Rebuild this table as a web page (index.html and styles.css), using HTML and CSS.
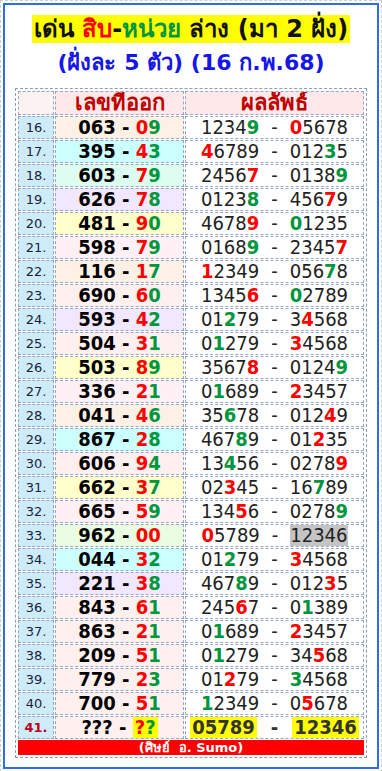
FILE: index.html
```html
<!DOCTYPE html>
<html lang="th">
<head>
    <meta charset="UTF-8">
    <meta name="viewport" content="width=device-width, initial-scale=1.0">
    <title>เด่น สิบ-หน่วย ล่าง</title>
    <link rel="stylesheet" href="styles.css">
</head>
<body>
    <div class="page">
        <div class="frame">
            <div class="title">
                <span class="title-box">เด่น <span class="r">สิบ</span>-<span class="g">หน่วย</span> ล่าง (มา 2 ฝั่ง)</span>
            </div>
            <div class="subtitle">(ฝั่งละ 5 ตัว) (16 ก.พ.68)</div>

            <table class="board">
                <tr class="head">
                    <td class="no"></td>
                    <td class="out">เลขที่ออก</td>
                    <td class="res">ผลลัพธ์</td>
                </tr>
                <tr class="peach">
                    <td class="no">16.</td>
                    <td class="out">063 - <span class="r">0</span><span class="g">9</span></td>
                    <td class="res">1234<b class="g">9</b><span class="dash">-</span><b class="r">0</b>5678</td>
                </tr>
                <tr class="cyan">
                    <td class="no">17.</td>
                    <td class="out">395 - <span class="r">4</span><span class="g">3</span></td>
                    <td class="res"><b class="r">4</b>6789<span class="dash">-</span>012<b class="g">3</b>5</td>
                </tr>
                <tr class="mint">
                    <td class="no">18.</td>
                    <td class="out">603 - <span class="r">7</span><span class="g">9</span></td>
                    <td class="res">2456<b class="r">7</b><span class="dash">-</span>0138<b class="g">9</b></td>
                </tr>
                <tr class="lilac">
                    <td class="no">19.</td>
                    <td class="out">626 - <span class="r">7</span><span class="g">8</span></td>
                    <td class="res">0123<b class="g">8</b><span class="dash">-</span>456<b class="r">7</b>9</td>
                </tr>
                <tr class="lemon">
                    <td class="no">20.</td>
                    <td class="out">481 - <span class="r">9</span><span class="g">0</span></td>
                    <td class="res">4678<b class="r">9</b><span class="dash">-</span><b class="g">0</b>1235</td>
                </tr>
                <tr class="rose">
                    <td class="no">21.</td>
                    <td class="out">598 - <span class="r">7</span><span class="g">9</span></td>
                    <td class="res">0168<b class="g">9</b><span class="dash">-</span>2345<b class="r">7</b></td>
                </tr>
                <tr class="peach">
                    <td class="no">22.</td>
                    <td class="out">116 - <span class="r">1</span><span class="g">7</span></td>
                    <td class="res"><b class="r">1</b>2349<span class="dash">-</span>056<b class="g">7</b>8</td>
                </tr>
                <tr class="pink">
                    <td class="no">23.</td>
                    <td class="out">690 - <span class="r">6</span><span class="g">0</span></td>
                    <td class="res">1345<b class="r">6</b><span class="dash">-</span><b class="g">0</b>2789</td>
                </tr>
                <tr class="lilac">
                    <td class="no">24.</td>
                    <td class="out">593 - <span class="r">4</span><span class="g">2</span></td>
                    <td class="res">01<b class="g">2</b>79<span class="dash">-</span>3<b class="r">4</b>568</td>
                </tr>
                <tr class="pink">
                    <td class="no">25.</td>
                    <td class="out">504 - <span class="r">3</span><span class="g">1</span></td>
                    <td class="res">0<b class="g">1</b>279<span class="dash">-</span><b class="r">3</b>4568</td>
                </tr>
                <tr class="lemon">
                    <td class="no">26.</td>
                    <td class="out">503 - <span class="r">8</span><span class="g">9</span></td>
                    <td class="res">3567<b class="r">8</b><span class="dash">-</span>0124<b class="g">9</b></td>
                </tr>
                <tr class="rose">
                    <td class="no">27.</td>
                    <td class="out">336 - <span class="r">2</span><span class="g">1</span></td>
                    <td class="res">0<b class="g">1</b>689<span class="dash">-</span><b class="r">2</b>3457</td>
                </tr>
                <tr class="peach">
                    <td class="no">28.</td>
                    <td class="out">041 - <span class="r">4</span><span class="g">6</span></td>
                    <td class="res">35<b class="g">6</b>78<span class="dash">-</span>012<b class="r">4</b>9</td>
                </tr>
                <tr class="cyan">
                    <td class="no">29.</td>
                    <td class="out">867 - <span class="r">2</span><span class="g">8</span></td>
                    <td class="res">467<b class="g">8</b>9<span class="dash">-</span>01<b class="r">2</b>35</td>
                </tr>
                <tr class="pink">
                    <td class="no">30.</td>
                    <td class="out">606 - <span class="r">9</span><span class="g">4</span></td>
                    <td class="res">13<b class="g">4</b>56<span class="dash">-</span>0278<b class="r">9</b></td>
                </tr>
                <tr class="lemon">
                    <td class="no">31.</td>
                    <td class="out">662 - <span class="r">3</span><span class="g">7</span></td>
                    <td class="res">02<b class="r">3</b>45<span class="dash">-</span>16<b class="g">7</b>89</td>
                </tr>
                <tr class="rose">
                    <td class="no">32.</td>
                    <td class="out">665 - <span class="r">5</span><span class="g">9</span></td>
                    <td class="res">134<b class="r">5</b>6<span class="dash">-</span>0278<b class="g">9</b></td>
                </tr>
                <tr class="lime">
                    <td class="no">33.</td>
                    <td class="out">962 - <span class="r">00</span></td>
                    <td class="res"><b class="r">0</b>5789<span class="dash">-</span><span class="grey">12346</span></td>
                </tr>
                <tr class="cyan">
                    <td class="no">34.</td>
                    <td class="out">044 - <span class="r">3</span><span class="g">2</span></td>
                    <td class="res">01<b class="g">2</b>79<span class="dash">-</span><b class="r">3</b>4568</td>
                </tr>
                <tr class="lilac">
                    <td class="no">35.</td>
                    <td class="out">221 - <span class="r">3</span><span class="g">8</span></td>
                    <td class="res">467<b class="g">8</b>9<span class="dash">-</span>012<b class="r">3</b>5</td>
                </tr>
                <tr class="pink">
                    <td class="no">36.</td>
                    <td class="out">843 - <span class="r">6</span><span class="g">1</span></td>
                    <td class="res">245<b class="r">6</b>7<span class="dash">-</span>0<b class="g">1</b>389</td>
                </tr>
                <tr class="pink">
                    <td class="no">37.</td>
                    <td class="out">863 - <span class="r">2</span><span class="g">1</span></td>
                    <td class="res">0<b class="g">1</b>689<span class="dash">-</span><b class="r">2</b>3457</td>
                </tr>
                <tr class="pink">
                    <td class="no">38.</td>
                    <td class="out">209 - <span class="r">5</span><span class="g">1</span></td>
                    <td class="res">0<b class="g">1</b>279<span class="dash">-</span>34<b class="r">5</b>68</td>
                </tr>
                <tr class="pink">
                    <td class="no">39.</td>
                    <td class="out">779 - <span class="r">2</span><span class="g">3</span></td>
                    <td class="res">01<b class="r">2</b>79<span class="dash">-</span><b class="g">3</b>4568</td>
                </tr>
                <tr class="pink">
                    <td class="no">40.</td>
                    <td class="out">700 - <span class="r">5</span><span class="g">1</span></td>
                    <td class="res"><b class="g">1</b>2349<span class="dash">-</span>0<b class="r">5</b>678</td>
                </tr>
                <tr class="pink next">
                    <td class="no">41.</td>
                    <td class="out">??? - <span class="mark"><span class="r">?</span><span class="g">?</span></span></td>
                    <td class="res"><span class="mark">05789</span><span class="dash">-</span><span class="mark">12346</span></td>
                </tr>
                <tr>
                    <td class="credit" colspan="3">(ศิษย์&nbsp; อ. Sumo)</td>
                </tr>
            </table>
        </div>
    </div>
</body>
</html>
```

FILE: styles.css
```css
body {
    margin: 0;
    background-color: #ffffff;
    font-family: "DejaVu Sans", "Noto Sans", sans-serif;
}

.page {
    width: 382px;
    box-sizing: border-box;
    padding: 2px;
    border: 1px dashed #c4cede;
}

.frame {
    border: 2px solid #2d6de6;
    padding: 10px 0 9px;
}

.title {
    text-align: center;
    line-height: 28px;
}

.title-box {
    display: inline-block;
    background-color: #ffff00;
    padding: 0 2px;
    font-size: 24px;
    font-weight: bold;
    color: #111111;
}

.subtitle {
    margin-top: 3px;
    text-align: center;
    line-height: 27px;
    font-size: 22px;
    font-weight: bold;
    color: #1616e8;
}

.r {
    color: #ff0000;
}

.g {
    color: #00963c;
}

.board {
    width: 352px;
    margin: 12px auto 0;
    border: 1px dashed #8c9cbc;
    border-spacing: 1px;
    padding: 1px;
    table-layout: fixed;
}

.board td {
    border: 1px dashed #97a7c6;
    padding: 0;
    text-align: center;
    line-height: 21px;
    white-space: nowrap;
    overflow: hidden;
}

.no {
    width: 34px;
    background-color: #cdecf8;
    font-size: 13px;
    color: #1c1c3c;
}

.out {
    width: 127px;
    font-family: "DejaVu Sans Condensed", "DejaVu Sans", sans-serif;
    font-stretch: condensed;
    font-size: 20px;
    font-weight: bold;
    color: #000000;
}

.res {
    background-color: #ffffff;
    font-family: "DejaVu Sans Condensed", "DejaVu Sans", sans-serif;
    font-stretch: condensed;
    font-size: 20px;
    color: #222222;
}

.dash {
    margin: 0 12px;
}

.head td {
    line-height: 22px;
    background-color: #fde9e9;
    font-family: "DejaVu Sans", "Noto Sans", sans-serif;
    font-stretch: normal;
    font-size: 22px;
    font-weight: bold;
    color: #c00000;
}

.head .no {
    background-color: #fbf2f2;
}

.peach .out { background-color: #fdf0e4; }
.cyan .out { background-color: #ccffff; }
.mint .out { background-color: #dcfdf0; }
.lilac .out { background-color: #f1e8ff; }
.lemon .out { background-color: #ffffcc; }
.rose .out { background-color: #fff0f6; }
.pink .out { background-color: #fff0f0; }
.lime .out { background-color: #eafde0; }

.grey {
    display: inline-block;
    background-color: #c4c4c4;
    line-height: 21px;
    vertical-align: top;
}

.mark {
    display: inline-block;
    background-color: #ffff00;
    padding: 0 2px;
    line-height: 21px;
    vertical-align: top;
}

.next .no {
    font-weight: bold;
    color: #c0001c;
}

.next .res {
    font-weight: bold;
    color: #333333;
}

.next .res .dash {
    margin: 0 14px;
}

.board td.credit {
    border: none;
    padding: 0;
    background-color: #ff0000;
    line-height: 15px;
    font-size: 13px;
    font-weight: bold;
    color: #ffffff;
}
```
